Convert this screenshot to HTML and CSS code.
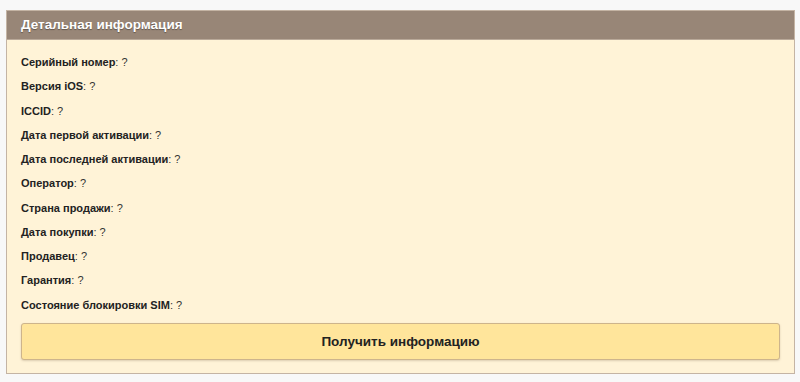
FILE: index.html
```html
<!DOCTYPE html>
<html>
<head>
	<title>Детальная информация</title>
	<meta name="viewport" content="width=device-width">
	<link rel="stylesheet" href="styles.css">
</head>
<body>
	<div class="panel">
		<div class="panel-head">Детальная информация</div>
		<div class="panel-body">
			<p class="row"><b>Серийный номер</b>: ?</p>
			<p class="row"><b>Версия iOS</b>: ?</p>
			<p class="row"><b>ICCID</b>: ?</p>
			<p class="row"><b>Дата первой активации</b>: ?</p>
			<p class="row"><b>Дата последней активации</b>: ?</p>
			<p class="row"><b>Оператор</b>: ?</p>
			<p class="row"><b>Страна продажи</b>: ?</p>
			<p class="row"><b>Дата покупки</b>: ?</p>
			<p class="row"><b>Продавец</b>: ?</p>
			<p class="row"><b>Гарантия</b>: ?</p>
			<p class="row"><b>Состояние блокировки SIM</b>: ?</p>
			<div class="btn">Получить информацию</div>
		</div>
	</div>
</body>
</html>
```

FILE: styles.css
```css
*{
	margin: 0;
	padding: 0;
	box-sizing: border-box;
}
body{
	background: #f8f8f8;
	font-family: "Liberation Sans", Arial, sans-serif;
	padding: 10px 5px 0 6px;
}
.panel{
	border: 1px solid #c4b4a4;
	background: #fff3d7;
	height: 364px;
}
.panel-head{
	height: 29px;
	line-height: 28px;
	background: #988677;
	border-bottom: 1px solid #b9a999;
	color: #fff;
	font-size: 13.5px;
	font-weight: bold;
	padding-left: 14px;
	text-shadow: 0 1px 1px rgba(0,0,0,.35);
}
.panel-body{
	padding: 14px 14px 12px 14px;
}
.row{
	font-size: 11px;
	line-height: 16px;
	height: 16px;
	margin-bottom: 8.25px;
	color: #333;
}
.row b{
	color: #222;
}
.btn{
	margin-top: 10px;
	height: 37px;
	line-height: 35px;
	background: #ffe59b;
	border: 1px solid #cdb48c;
	border-radius: 3px;
	box-shadow: 0 1px 2px rgba(120,100,70,.25);
	text-align: center;
	font-size: 13.5px;
	font-weight: bold;
	color: #222;
	cursor: pointer;
}
```
